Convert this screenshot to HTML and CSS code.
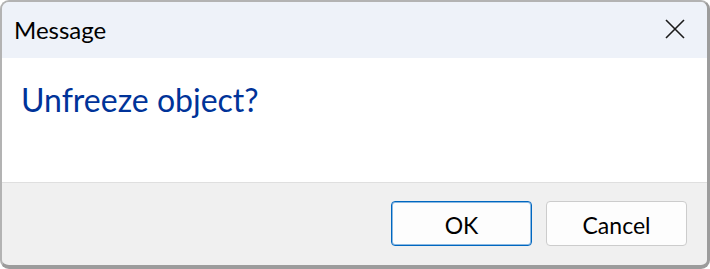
FILE: index.html
```html
<!DOCTYPE html>
<html lang="en">
<head>
<meta charset="utf-8">
<title>Message</title>
<link rel="stylesheet" href="styles.css">
</head>
<body>
<div class="window">
  <div class="titlebar">
    <div class="title">Message</div>
    <div class="close" aria-label="Close">
      <svg width="20" height="20" viewBox="0 0 20 20"><path d="M1 1 L19 19 M19 1 L1 19" stroke="#1b1b1b" stroke-width="1.6" fill="none"/></svg>
    </div>
  </div>
  <div class="content">
    <div class="instruction">Unfreeze object?</div>
  </div>
  <div class="footer">
    <button class="btn btn-default">OK</button>
    <button class="btn">Cancel</button>
  </div>
</div>
</body>
</html>
```

FILE: styles.css
```css
html, body {
  margin: 0;
  padding: 0;
  background: #ffffff;
}
body {
  font-family: Lato, "Liberation Sans", sans-serif;
  width: 710px;
  height: 269px;
  overflow: hidden;
}
.window {
  box-sizing: border-box;
  width: 710px;
  height: 269px;
  border-style: solid;
  border-color: #b3b3b3 #9c9c9c #9c9c9c #b3b3b3;
  border-width: 2px 3px 4px 2px;
  border-radius: 9px;
  overflow: hidden;
  display: flex;
  flex-direction: column;
  background: #f0f0f0;
}
.titlebar {
  height: 56px;
  flex: none;
  background: #eef2f9;
  display: flex;
  align-items: flex-start;
}
.title {
  flex: 1;
  font-size: 24px;
  line-height: 56px;
  color: #000000;
  padding-left: 12px;
}
.close {
  width: 20px;
  height: 20px;
  margin: 17px 22px 0 0;
}
.close svg {
  display: block;
}
.content {
  height: 125px;
  flex: none;
  background: #ffffff;
  border-bottom: 1px solid #dfdfdf;
  box-sizing: border-box;
  padding: 23px 0 0 19px;
}
.instruction {
  font-size: 32px;
  line-height: 1.2;
  color: #003399;
}
.footer {
  flex: 1;
  display: flex;
  justify-content: flex-end;
  align-items: flex-start;
  gap: 14px;
  padding: 18px 20px 0 0;
}
.btn {
  box-sizing: border-box;
  width: 141px;
  height: 45px;
  border: 1px solid #cccccc;
  border-radius: 4px;
  background: #fdfdfd;
  font-family: Lato, "Liberation Sans", sans-serif;
  font-size: 23px;
  color: #000000;
  padding: 2px 0 0 0;
  margin: 0;
}
.btn-default {
  border-color: #0067c0;
  box-shadow: inset 0 0 0 1px rgba(0, 103, 192, 0.45);
}
```
